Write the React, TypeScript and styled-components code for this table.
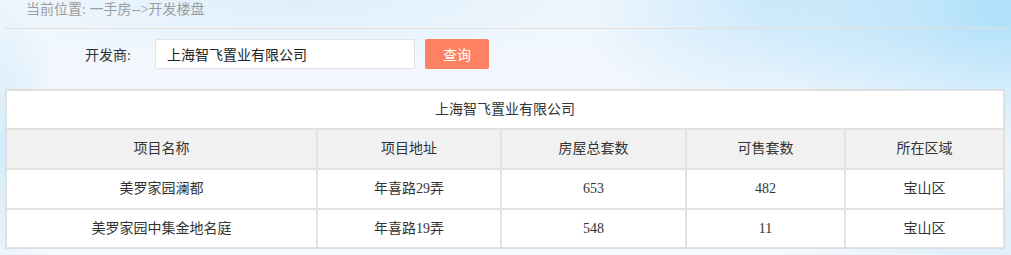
import React from "react";
import styled, { createGlobalStyle } from "styled-components";

const GlobalStyle = createGlobalStyle`
  html, body {
    margin: 0;
    padding: 0;
  }
  body {
    font-family: "Liberation Serif", "Noto Sans CJK SC", serif;
    font-size: 14px;
    color: #333;
    background-color: #f4f8fd;
    background-image:
      radial-gradient(ellipse 260px 140px at 1000px 10px, rgba(170, 222, 250, 0.95), rgba(170, 222, 250, 0) 100%),
      radial-gradient(ellipse 180px 120px at 760px 0px, rgba(190, 228, 250, 0.7), rgba(190, 228, 250, 0) 100%),
      radial-gradient(ellipse 60px 160px at 0px 150px, rgba(205, 232, 249, 0.8), rgba(205, 232, 249, 0) 100%),
      radial-gradient(ellipse 300px 60px at 300px 0px, rgba(214, 236, 250, 0.7), rgba(214, 236, 250, 0) 100%),
      radial-gradient(ellipse 200px 140px at 980px 230px, rgba(200, 232, 250, 0.6), rgba(200, 232, 250, 0) 100%),
      linear-gradient(180deg, #eff6fd 0%, #f6f9fd 100%);
    min-height: 255px;
  }
`;

const Page = styled.div`
  margin: 0 5px;
  width: 1001px;
`;

const Crumb = styled.div`
  height: 20px;
  line-height: 20px;
  padding: 0 0 8px 21px;
  color: #9c9c9c;
  font-size: 14px;
  border-bottom: 1px solid #e6ded7;
`;

const SearchBar = styled.form`
  display: flex;
  align-items: center;
  padding: 10px 0 0 80px;
  height: 30px;
`;

const Label = styled.label`
  width: 70px;
  color: #333;
  font-size: 14px;
`;

const Input = styled.input`
  box-sizing: border-box;
  width: 260px;
  height: 30px;
  border: 1px solid #e2e2e2;
  border-radius: 2px;
  background: #fff;
  padding: 0 0 0 11px;
  font-family: inherit;
  font-size: 14px;
  color: #222;
  outline: none;
`;

const Button = styled.button`
  margin-left: 10px;
  width: 64px;
  height: 30px;
  border: 0;
  border-radius: 2px;
  background: #ff8163;
  color: #fff;
  font-family: inherit;
  font-size: 14px;
  cursor: pointer;
`;

const Table = styled.table`
  margin-top: 20px;
  width: 1000px;
  table-layout: fixed;
  border: 1px solid #dedede;
  border-spacing: 0;
  background: #fff;
`;

const Cell = styled.td<{ $h?: number }>`
  padding: 0;
  border: 1px solid #e2e2e2;
  text-align: center;
  font-size: 14px;
  color: #333;
  line-height: ${(p) => p.$h ?? 38}px;
  white-space: nowrap;
`;

const HeadCell = styled(Cell).attrs({ as: "th" })`
  background: #f1f1f1;
  font-weight: normal;
`;

const columns = [
  { title: "项目名称", width: 311 },
  { title: "项目地址", width: 184 },
  { title: "房屋总套数", width: 185 },
  { title: "可售套数", width: 159 },
  { title: "所在区域", width: 159 },
];

const projects = [
  ["美罗家园澜都", "年喜路29弄", "653", "482", "宝山区"],
  ["美罗家园中集金地名庭", "年喜路19弄", "548", "11", "宝山区"],
];

export default function App() {
  const developer = "上海智飞置业有限公司";
  return (
    <>
      <GlobalStyle />
      <Page>
        <Crumb>当前位置: 一手房--&gt;开发楼盘</Crumb>
        <SearchBar onSubmit={(e) => e.preventDefault()}>
          <Label>开发商:</Label>
          <Input defaultValue={developer} />
          <Button type="submit">查询</Button>
        </SearchBar>
        <Table>
          <colgroup>
            {columns.map((c) => (
              <col key={c.title} style={{ width: c.width }} />
            ))}
          </colgroup>
          <tbody>
            <tr>
              <Cell colSpan={5} $h={37}>
                {developer}
              </Cell>
            </tr>
            <tr>
              {columns.map((c) => (
                <HeadCell key={c.title}>{c.title}</HeadCell>
              ))}
            </tr>
            {projects.map((row, i) => (
              <tr key={row[0]}>
                {row.map((v, j) => (
                  <Cell key={j} $h={i === projects.length - 1 ? 37 : 38}>
                    {v}
                  </Cell>
                ))}
              </tr>
            ))}
          </tbody>
        </Table>
      </Page>
    </>
  );
}
